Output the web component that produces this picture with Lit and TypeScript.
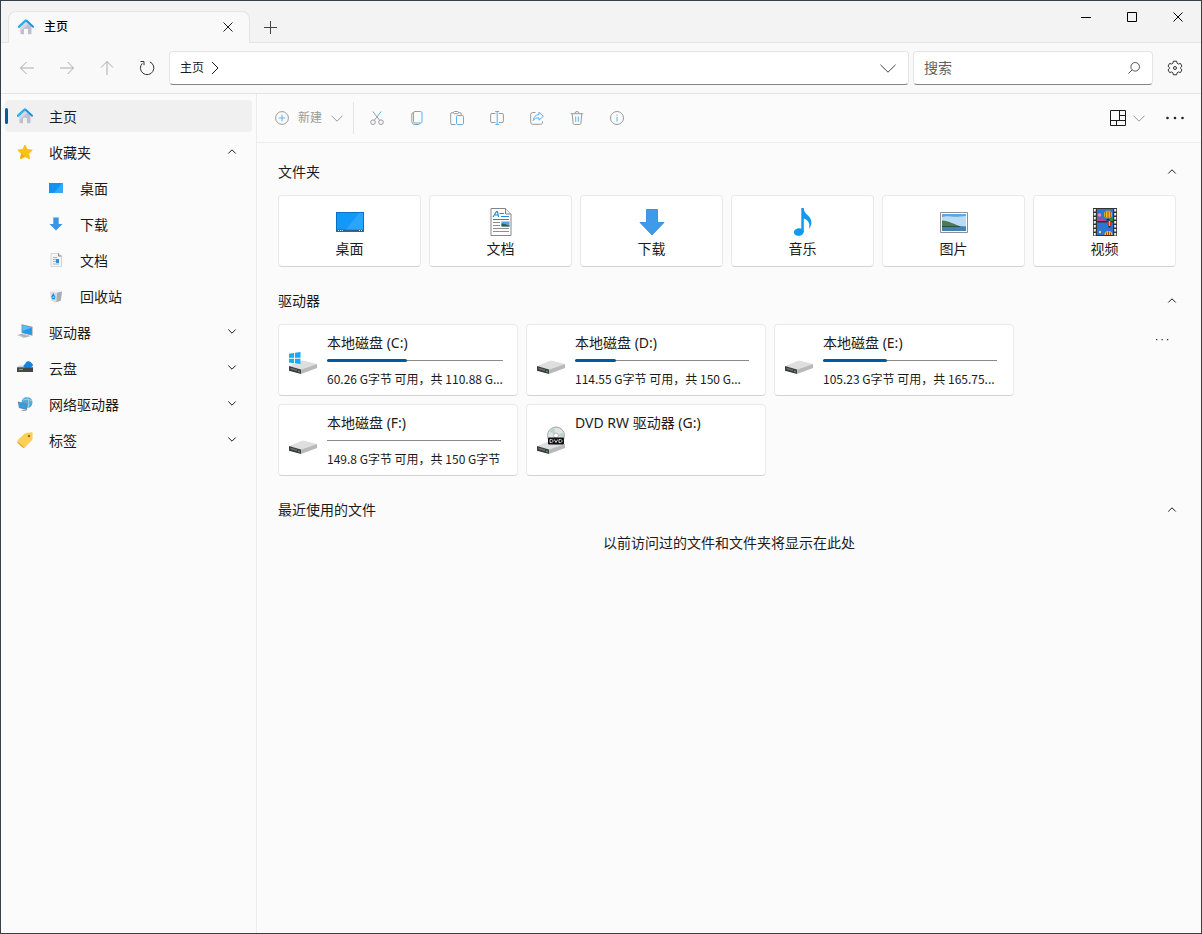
import { LitElement, html, css, svg, nothing } from "lit";
import { customElement, property, state } from "lit/decorators.js";
import { classMap } from "lit/directives/class-map.js";

const DISK = svg`
  <path d="M0 20 14 14.500 28 18 12 23.500z" fill="#dedede"/>
  <path d="M0 20 12 23.500 12 28 0 24.800z" fill="#3a3c3b"/>
  <path d="M1.500 21.800 8 23.600 8 25 1.500 23.200z" fill="#6d706e"/>
  <path d="M12 23.500 28 18 28 22 12 28z" fill="#b9b9b9"/>
  <path d="M10 24.500v1.800" stroke="#3fbf3a" stroke-width="1.500"/>`;

const ICONS: Record<string, [string, unknown]> = {
  home: ["0 0 16 16", svg`
    <path d="M2.500 7.500 8 2.500l5.500 5V14a1.200 1.200 0 0 1-1.200 1.200H10V10.500a.8.8 0 0 0-.8-.8H6.800a.8.8 0 0 0-.8.800v4.700H3.700A1.200 1.200 0 0 1 2.500 14z" fill="#bcc0cf"/>
    <path d="M2.500 7.500 8 2.500l2.500 2.300L2.500 12z" fill="#d5d8e2"/>
    <path d="M.9 7.800 7.400 1.700a.9.9 0 0 1 1.200 0l6.500 6.100" fill="none" stroke="#1c8fe0" stroke-width="1.900" stroke-linecap="round" stroke-linejoin="round"/>
    <path d="M.9 7.800 7.600 1.500" fill="none" stroke="#2fb4ee" stroke-width="1.900" stroke-linecap="round"/>`],
  star: ["0 0 16 16", svg`
    <path d="M8 1 10.200 5.500 15.200 6.200 11.600 9.700 12.500 14.800 8 12.400 3.500 14.800 4.400 9.700.8 6.200 5.800 5.500z" fill="#fcc012" stroke="#fcc012" stroke-linejoin="round"/>
    <path d="M8 12.400 3.500 14.800 4.400 9.700z" fill="#f5a60f"/>`],
  desktopSmall: ["0 0 14 14", svg`<path d="M0 2h14v10H0z" fill="#0f93f5"/><path d="M5 12 13 2h1v10z" fill="#35a8fa"/>`],
  downloadSmall: ["0 0 14 14", svg`<path d="M4.300.500h5.400V7h3.800L7 13.500.5 7h3.800z" fill="#3794e6"/>`],
  docSmall: ["0 0 14 14", svg`
    <path d="M2 .500h7.500l3 2.500v10.500h-10.500z" fill="#f4f5f6" stroke="#d3d6da"/>
    <path d="M4 4.500h4M4 6.500h6M4 8.500h3M4 11h6" stroke="#8cb9dc"/><path d="M7 6h3v4H7z" fill="#3b8cc9"/><path d="M9.500.500v2.500h3" fill="none" stroke="#7d8690"/>`],
  recycle: ["0 0 14 14", svg`
    <path d="M.8 2.500 8 .5l5 2-1.200 9L6.500 13.700 2.300 11.500z" fill="#d9dce0"/>
    <path d="M8 3.500 13 2.500l-1.200 9L7.500 13.300z" fill="#a9adb4"/>
    <path d="M.8 2.500 8 3.500l5-1L8 .5z" fill="#f2f3f4"/>
    <path d="M2.500 8.500 4.300 5.500 6 8.500M3 9.500h3" fill="none" stroke="#1c8be0" stroke-width="1.400"/>`],
  pc: ["0 0 16 16", svg`
    <path d="M4.500 .3 15.500 2.800v9L4.500 9z" fill="#8896a3"/><path d="M5.300 1.300 14.800 3.500v7.200L5.300 8.300z" fill="#1f9af0"/>
    <path d="M5.300 1.300 14.800 3.500 5.500 7z" fill="#5cbcf8"/>
    <path d="M0 11 6 9.800 14 12.300 7 14z" fill="#c9d0d6"/><path d="M1.500 11.100 6 10.200M4 12 9 10.900M6 12.900 12 11.700" stroke="#8d979f" stroke-width=".6"/>`],
  cloud: ["0 0 16 16", svg`
    <path d="M2 5.500h12l2 2H0z" fill="#cfd6db"/>
    <path d="M6.500 6.500a2.500 2.500 0 0 1 1.600-2.600A3.500 3.500 0 0 1 14.500 3 2.400 2.400 0 0 1 15.300 6.500L12.500 7.500H8z" fill="#1683da"/>
    <path d="M0 7.300h16v4.700H0z" fill="#444648"/><path d="M2 9.500h4" stroke="#3fc14b" stroke-width="1.300"/>`],
  network: ["0 0 16 16", svg`
    <circle cx="10" cy="6.500" r="5.500" fill="#54a8d6"/><path d="M6 4c3-1 6-1 9 1M10 1c2 3 2.500 7 1 11" fill="none" stroke="#a8d6ee" stroke-width=".9"/>
    <path d="M.8 5.500 10 7.800V14L2 12z" fill="#6e818f"/><path d="M1.600 6.500 9.300 8.400v4.600L2.500 11.300z" fill="#27a1f3"/>
    <path d="M4 14.200 8 13.500l2 1.500H5z" fill="#9fadb7"/>`],
  tag: ["0 0 16 16", svg`
    <path d="M9 .9 14.400.3A1.200 1.200 0 0 1 15.700 1.600l-.2 5.400a2 2 0 0 1-.5 1.200L8.600 14.800a1.500 1.500 0 0 1-2.100 0L1 9.900a1.500 1.500 0 0 1 0-2.100L7.700 1.400A2 2 0 0 1 9 .9z" fill="#fcd053"/>
    <path d="M.7 9.200 6.500 14.500a1.400 1.400 0 0 0 2 .1l-1 1a1.500 1.500 0 0 1-2 0L.8 11.300a1.500 1.500 0 0 1-.1-2.100z" fill="#eda63b"/>
    <circle cx="12" cy="4" r="1.200" fill="#9c6a20"/>`],
  back: ["0 0 16 16", svg`<path d="M15 8H1.500M7.500 2 1.500 8l6 6" class="ln"/>`],
  forward: ["0 0 16 16", svg`<path d="M1 8h13.500M8.500 2l6 6-6 6" class="ln"/>`],
  up: ["0 0 16 16", svg`<path d="M8 15V1.500M2 7.500l6-6 6 6" class="ln"/>`],
  reload: ["0 0 16 16", svg`<path d="M10.800 1.800A6.700 6.700 0 1 1 3.300 3.300M1.500 1.500H5v3.700" class="ln"/>`],
  chevRight: ["0 0 8 14", svg`<path d="M1 1l6 6-6 6" class="ln"/>`],
  chevDown: ["0 0 16 9", svg`<path d="M.5.800 8 8.200 15.500.8" class="ln"/>`],
  chevMid: ["0 0 12 7", svg`<path d="M.5.700 6 6.200 11.500.7" class="ln"/>`],
  caretDown: ["0 0 8 7", svg`<path d="M.3.500 4 4.200 7.700.5" class="ln"/>`],
  caretUp: ["0 0 8 7", svg`<path d="M.3 4.500 4 .8 7.700 4.500" class="ln"/>`],
  close: ["0 0 10 10", svg`<path d="M.5.500l9 9M9.500.500l-9 9" class="ln"/>`],
  plus: ["0 0 13 13", svg`<path d="M6.500 0v13M0 6.500h13" class="ln"/>`],
  min: ["0 0 10 10", svg`<path d="M0 5.500h10" class="ln"/>`],
  max: ["0 0 10 10", svg`<path d="M.5.500h9v9h-9z" class="ln"/>`],
  search: ["0 0 12 12", svg`<circle cx="7.200" cy="4.800" r="4.300" class="ln"/><path d="M4.100 7.900.4 11.600" class="ln"/>`],
  gear: ["0 0 16 16", svg`<path d="M6.400 1.200h3.200l.5 2 1.300.8 2-.6 1.600 2.800L13.500 7.600v.8L15 9.800l-1.600 2.800-2-.6-1.300.8-.5 2H6.400l-.5-2-1.300-.8-2 .6L1 9.800l1.500-1.400v-.8L1 6.200l1.600-2.800 2 .6 1.300-.8z" class="ln" stroke-linejoin="round"/><circle cx="8" cy="8" r="1.500" class="ln"/>`],
  create: ["0 0 14 14", svg`<circle cx="7" cy="7" r="6.400" class="ln"/><path d="M7 3.700v6.600M3.700 7h6.600" class="bl"/>`],
  cut: ["0 0 14 14", svg`<circle cx="3" cy="11.200" r="2.300" class="ln"/><circle cx="11" cy="11.200" r="2.300" class="ln"/><path d="M2.800.500 9.700 9.300" class="ln"/><path d="M4.300 9.300 6.500 6.500" class="ln"/><path d="M6.500 6.500 11.200.5" class="bl"/>`],
  copy: ["0 0 14 14", svg`<path d="M3.300 1.500a1.800 1.800 0 0 0-1.500 1.700v7.300a3 3 0 0 0 3 3H8.500a1.800 1.800 0 0 0 1.600-1.200" class="ln"/><rect x="3.500" y=".5" width="8.500" height="11.500" rx="1.500" class="bl"/>`],
  paste: ["0 0 14 14", svg`<path d="M5.500 13.500H2A1.200 1.200 0 0 1 .7 12.300V3A1.200 1.200 0 0 1 2 1.700h1.500M8.500 1.700H10A1.200 1.200 0 0 1 11.200 3v.8" class="ln"/><rect x="3.500" y=".5" width="5" height="2.200" rx="1" class="ln"/><rect x="6.500" y="4.500" width="7" height="9" rx="1.200" class="bl"/>`],
  rename: ["0 0 14 14", svg`<path d="M5.500 2.500H2A1.300 1.300 0 0 0 .6 3.800v6.400A1.300 1.300 0 0 0 2 11.500h3.500M8.800 2.500H12a1.300 1.300 0 0 1 1.400 1.300v6.400A1.300 1.300 0 0 1 12 11.500H8.800" class="ln"/><path d="M7.200.5v13M5.300.500h3.800M5.300 13.500h3.800" class="bl"/>`],
  share: ["0 0 14 14", svg`<path d="M5.500 1.500H2.700A2 2 0 0 0 .7 3.500v7.800a2 2 0 0 0 2 2h7.800a2 2 0 0 0 2-2V10.200" class="ln"/><path d="M9 1.200 13.400 5.200 9 9.200V6.900C6.200 6.700 4.500 7.500 3.200 9.600 3.500 6.300 5.300 3.900 9 3.500z" class="bl" stroke-linejoin="round"/>`],
  trash: ["0 0 14 14", svg`<path d="M.8 2.700h12.400M5 2.500a2 2 0 0 1 4 0M2.200 2.800 3.100 12.200a1.400 1.400 0 0 0 1.400 1.300h5a1.400 1.400 0 0 0 1.400-1.300L11.800 2.800" class="ln"/><path d="M5.700 5.500v5.300M8.300 5.500v5.300" class="bl"/>`],
  info: ["0 0 14 14", svg`<circle cx="7" cy="7" r="6.500" class="ln"/><path d="M7 6v4.500M7 3.500v1.200" class="bl"/>`],
  layout: ["0 0 16 16", svg`<path d="M.5.500h15v15H.5zM.5 10.500h15M9.500.500v10M9.500 5.500h6M6.500 10.500v5" class="ln"/>`],
  dotsBig: ["0 0 18 4", svg`<circle cx="1.500" cy="2" r="1.300"/><circle cx="9" cy="2" r="1.300"/><circle cx="16.500" cy="2" r="1.300"/>`],
  dots: ["0 0 14 2", svg`<path d="M1 0h1.300v1.300H1zM6.500 0h1.300v1.300H6.500zM12 0h1.300v1.300H12z"/>`],
  desktop: ["0 0 28 28", svg`<path d="M0 4h28v20H0z" fill="#0b6fc2"/><path d="M1 5h26v16.500H1z" fill="#1199fa"/><path d="M10 21.500 23 5h4v16.500z" fill="#2ba5fb"/><path d="M1 22.500h26" stroke="#2e5f8d"/><path d="M2 22.500h6M23 22.500h3" stroke="#d3e6f5" stroke-dasharray="1 1"/>`],
  document: ["0 0 28 28", svg`
    <path d="M4 .500h14.500L24 6v21.500H4z" fill="#fff" stroke="#858585"/>
    <path d="M18.500.500V6H24" fill="#f0f0f0" stroke="#858585"/>
    <path d="M6 9 9.500 3.500h1L11.500 9M8 7h3M12.500 5.500h4.500M14 8.500h8M6 11.500h16" fill="none" stroke="#1590e0" stroke-width="1.200"/>
    <path d="M6 14.500h7M6 17.500h7M6 20.500h16M6 23.500h16" stroke="#8f8f8f"/>
    <path d="M14.500 13.500h8v5h-8z" fill="#5aa3d6"/><path d="M14.500 15.500c3 0 5 1.500 8 2v1h-8z" fill="#2d5f54"/>`],
  download: ["0 0 28 28", svg`<path d="M8.500 1.500h11v13h6.500L14 27 2 14.500h6.500z" fill="#3f9aea" stroke="#2f82d0" stroke-width=".8"/>`],
  music: ["0 0 28 28", svg`<ellipse cx="9.800" cy="24" rx="5" ry="3.800" transform="rotate(-12 9.800 24)" fill="#0d9bf2"/><path d="M12.300 0h2.500c0 3.500 1.500 5 4 7.200 4.500 4 4.800 9.300 1.200 13.800 1-5 .2-8.500-5.200-10.500v13.500h-2.500z" fill="#0d9bf2"/>`],
  picture: ["0 0 28 28", svg`
    <path d="M.5 4.500h27v20H.5z" fill="#fff" stroke="#8e8e8e"/><path d="M2 6h24v17H2z" fill="#5da5e3"/>
    <path d="M2 9c6-2 10 1 24-1v10H2z" fill="#b9dcf4"/><path d="M2 12.500c7 0 12 4.500 22 6.500H2z" fill="#4c7a55"/>
    <path d="M2 19h24v4H2z" fill="#4481ad"/><path d="M2 18.500h18" stroke="#2a4f48"/>`],
  video: ["0 0 28 28", svg`
    <path d="M2 0h24v28H2z" fill="#333"/>
    <path d="M3.800 1v27M24.200 1v27" stroke="#f2f2f2" stroke-width="2" stroke-dasharray="2.400 1.600"/>
    <path d="M6 1h16v12H6zM6 14.500h16V27H6z" fill="#2f74d4"/>
    <circle cx="17" cy="6.500" r="4" fill="#f5c21b"/><path d="M15 3.200c-1 2-1 4.500 0 6.600M17 2.500v8M19 3.200c1 2 1 4.500 0 6.600" fill="none" stroke="#8a2f1e" stroke-width=".8"/><path d="M15.500 10.700h3v1.800h-3z" fill="#222"/>
    <circle cx="8.500" cy="7" r="1.800" fill="#ec87b4"/><path d="M6 10.500h6l3 2.500H6z" fill="#cc3e78"/><path d="M19 10h3v3h-3z" fill="#2b8a3e"/>
    <circle cx="18.500" cy="15.500" r="2.600" fill="#d5361e"/><path d="M18.500 13v5" stroke="#f5c21b"/><path d="M17.500 18h2v1.500h-2z" fill="#222"/>
    <path d="M13.500 27a4 4 0 0 1 8 0z" fill="#f5c21b"/><path d="M15.500 27v-2.500M17.500 27v-3.500M19.500 27v-2.500" stroke="#8a2f1e" stroke-width=".8"/><circle cx="9" cy="24" r="1.200" fill="#e6d37a"/>`],
  disk: ["0 -2 28 32", DISK],
  diskWin: ["0 -2 28 32", svg`${DISK}<path d="M0 7.800 5 7v4.800H0zM6 6.800 11.500 6v5.800H6zM0 12.700h5v4.600l-5-.8zM6 12.700h5.500v5.300l-5.500-.8z" fill="#11aef0"/>`],
  diskDvd: ["0 -2 28 32", svg`${DISK}
    <circle cx="19" cy="9.500" r="8.500" fill="#dfe4e4" stroke="#8f9696" stroke-width=".8"/><path d="M19 9.500 12 5a8.500 8.500 0 0 1 5-3.500zM19 9.500l7.500-3a8.500 8.500 0 0 1 .5 5z" fill="#bcd3cd"/>
    <circle cx="19" cy="9.500" r="2.400" fill="#fff" stroke="#999" stroke-width=".7"/>
    <rect x="11" y="11.500" width="16" height="7" rx="1" fill="#111"/>
    <path d="M13 13.500v3h1.500c2 0 2-3 0-3zM17.300 13.500 19 16.500 20.700 13.500M22 13.500v3h1.500c2 0 2-3 0-3z" fill="none" stroke="#ddd" stroke-width=".9"/>`],
};

@customElement("fm-icon")
class FmIcon extends LitElement {
  static styles = css`
    :host { display: inline-flex; flex: none; }
    svg { display: block; fill: currentColor; overflow: visible; }
    .ln { fill: none; stroke: currentColor; }
    .bl { fill: none; stroke: #5bb1ec; }
  `;
  @property() name = "";
  render() {
    const icon = ICONS[this.name];
    if (!icon) return nothing;
    const [, , w, h] = icon[0].split(" ");
    return html`<svg width=${w} height=${h} viewBox=${icon[0]} aria-hidden="true">${icon[1]}</svg>`;
  }
}

interface NavEntry { icon: string; label: string; id?: string; children?: NavEntry[] }
const NAV: NavEntry[] = [
  { icon: "home", label: "主页" },
  { icon: "star", label: "收藏夹", id: "fav", children: [
    { icon: "desktopSmall", label: "桌面" },
    { icon: "downloadSmall", label: "下载" },
    { icon: "docSmall", label: "文档" },
    { icon: "recycle", label: "回收站" },
  ] },
  { icon: "pc", label: "驱动器", id: "drives", children: [] },
  { icon: "cloud", label: "云盘", id: "cloud", children: [] },
  { icon: "network", label: "网络驱动器", id: "net", children: [] },
  { icon: "tag", label: "标签", id: "tags", children: [] },
];

const FOLDERS = [
  ["desktop", "桌面"], ["document", "文档"], ["download", "下载"],
  ["music", "音乐"], ["picture", "图片"], ["video", "视频"],
];

interface Drive { icon: string; name: string; used?: number; info?: string }
const DRIVES: Drive[] = [
  { icon: "diskWin", name: "本地磁盘 (C:)", used: 45.6, info: "60.26 G字节 可用，共 110.88 G..." },
  { icon: "disk", name: "本地磁盘 (D:)", used: 23.6, info: "114.55 G字节 可用，共 150 G..." },
  { icon: "disk", name: "本地磁盘 (E:)", used: 36.5, info: "105.23 G字节 可用，共 165.75..." },
  { icon: "disk", name: "本地磁盘 (F:)", used: 0, info: "149.8 G字节 可用，共 150 G字节" },
  { icon: "diskDvd", name: "DVD RW 驱动器 (G:)" },
];

const ACTIONS = [
  ["cut", "剪切"], ["copy", "复制"], ["paste", "粘贴"], ["rename", "重命名"],
  ["share", "共享"], ["trash", "删除"], ["info", "属性"],
];

@customElement("app-root")
class AppRoot extends LitElement {
  static styles = css`
    :host {
      display: flex;
      flex-direction: column;
      box-sizing: border-box;
      min-height: 100vh;
      border: 1px solid #35404a;
      background: #fbfbfb;
      color: #1b1b1b;
      font: 14px/20px "Noto Sans", "Noto Sans CJK SC", sans-serif;
    }
    *, *::before { box-sizing: border-box; }
    button, input {
      font: inherit;
      color: inherit;
      background: none;
      border: 0;
      padding: 0;
      margin: 0;
    }
    button { display: inline-flex; align-items: center; justify-content: center; }
    h2 { margin: 0; font-size: 14px; font-weight: 400; }
    ul { list-style: none; margin: 0; padding: 0; }

    .titlebar {
      display: flex;
      height: 42px;
      padding-left: 7px;
      background: #f3f3f3;
      box-shadow: inset 0 -1px #e5e5e5;
    }
    .tab {
      display: flex;
      align-items: center;
      width: 242px;
      margin-top: 10px;
      padding: 0 11px 2px 9px;
      background: #f9f9f9;
      border: 1px solid #e5e5e5;
      border-bottom: 0;
      border-radius: 8px 8px 0 0;
    }
    .tab-name { flex: 1; margin-left: 10px; font-size: 12px; font-weight: 500; color: #000; }
    .tab-close { width: 20px; height: 20px; }
    .tab-add { width: 41px; height: 32px; margin: 10px auto 0 0; color: #444; }
    .caption { width: 46px; height: 32px; color: #000; }

    .navbar {
      display: flex;
      align-items: center;
      height: 51px;
      padding: 0 9px 0 6px;
      background: #f9f9f9;
      border-bottom: 1px solid #e5e5e5;
    }
    .nav-btn { width: 40px; height: 34px; color: #333; }
    .nav-btn:disabled { color: #ababab; }
    .field {
      display: flex;
      align-items: center;
      height: 34px;
      background: #fff;
      border: 1px solid #e5e5e5;
      border-bottom-color: #868686;
      border-radius: 4px;
    }
    .path { flex: 1; margin: 0 4px 0 2px; padding: 0 12px 0 10px; gap: 7px; font-size: 12px; color: #1b1b1b; }
    .path-open { margin-left: auto; height: 32px; color: #444; }
    .find { width: 240px; padding: 0 12px 0 10px; color: #555; }
    .find input { flex: 1; min-width: 0; outline: none; }
    .find input::placeholder { color: #606060; opacity: 1; }
    .find button { height: 32px; }
    .settings { width: 34px; height: 34px; margin-left: 5px; color: #333; }

    .body { display: flex; flex: 1; }
    .side { width: 256px; padding: 6px 4px; border-right: 1px solid #ececec; }
    .side ul { display: grid; gap: 4px; }
    .side ul ul { margin-top: 4px; }
    .item {
      display: flex;
      justify-content: flex-start;
      width: 100%;
      height: 32px;
      padding: 0 16px 0 12px;
      gap: 16px;
      border-radius: 4px;
      text-align: left;
    }
    .item.child { padding-left: 44px; gap: 17px; }
    .item.current { position: relative; background: #f0f0f0; }
    .item.current::before {
      content: "";
      position: absolute;
      left: 0;
      top: 8px;
      width: 3px;
      height: 16px;
      border-radius: 2px;
      background: #005a9e;
    }
    .item-name { flex: 1; padding-top: 2px; }

    .main { flex: 1; min-width: 0; }
    .toolbar {
      display: flex;
      align-items: center;
      height: 49px;
      padding: 0 11px 0 18px;
      border-bottom: 1px solid #ececec;
      color: #9a9a9a;
    }
    .new { gap: 9px; height: 32px; font-size: 12px; }
    .sep { width: 1px; height: 32px; margin: 0 3px 0 10px; background: #e5e5e5; }
    .tool { width: 40px; height: 32px; }
    .view { gap: 7px; height: 32px; margin-left: auto; }
    .view-icon { color: #1b1b1b; }
    .more-big { width: 30px; height: 32px; margin-left: 15px; color: #222; }

    .content { display: grid; gap: 24px; padding: 19px 21px; }
    .head { display: flex; justify-content: space-between; align-items: center; height: 20px; }
    .head button { width: 16px; height: 20px; }
    .folders {
      display: grid;
      grid-template-columns: repeat(auto-fill, minmax(140px, 1fr));
      gap: 8px;
      padding: 13px 4px 0 0;
    }
    .card {
      background: #fff;
      border: 1px solid #e9e9e9;
      border-bottom-color: #d3d3d3;
      border-radius: 4px;
      height: 72px;
    }
    .folder { flex-direction: column; gap: 3px; padding-top: 4px; }
    .drive-row { display: flex; align-items: flex-start; padding-top: 13px; }
    .drives { display: grid; flex: 1; grid-template-columns: repeat(auto-fill, 240px); gap: 8px; }
    .drive { display: flex; justify-content: flex-start; align-items: center; gap: 10px; padding: 0 16px 0 10px; text-align: left; }
    .drive-text { display: grid; flex: 1; min-width: 0; align-self: stretch; align-content: start; padding-top: 8px; gap: 6px; }
    .drive-info { white-space: nowrap; font: 12px/22px "Noto Sans CJK SC", sans-serif; }
    .bar { display: flex; align-items: center; height: 3px; background: linear-gradient(#8a8a8a, #8a8a8a) center / 100% 1px no-repeat; }
    .fill { height: 3px; border-radius: 2px; background: #005a9e; }
    .more { width: 36px; height: 32px; color: #333; }
    .empty { margin: 13px 0 0; text-align: center; }
  `;

  @state() private open: Record<string, boolean> = { fav: true, folders: true, disks: true, recent: true };

  private toggle(id: string) {
    this.open = { ...this.open, [id]: !this.open[id] };
  }

  private navItem(e: NavEntry, child = false) {
    return html`<li>
      <button class=${classMap({ item: true, child, current: e.icon === "home" })} @click=${() => e.id && this.toggle(e.id)}>
        <fm-icon name=${e.icon}></fm-icon>
        <span class="item-name">${e.label}</span>
        ${e.id ? html`<fm-icon name=${this.open[e.id] ? "caretUp" : "caretDown"}></fm-icon>` : nothing}
      </button>
      ${e.id && this.open[e.id] && e.children!.length ? html`<ul>${e.children!.map((c) => this.navItem(c, true))}</ul>` : nothing}
    </li>`;
  }

  private head(id: string, title: string) {
    return html`<div class="head">
      <h2>${title}</h2>
      <button aria-label=${title} aria-expanded=${this.open[id]} @click=${() => this.toggle(id)}>
        <fm-icon name=${this.open[id] ? "caretUp" : "caretDown"}></fm-icon>
      </button>
    </div>`;
  }

  private drive(d: Drive) {
    return html`<button class="card drive">
      <fm-icon name=${d.icon}></fm-icon>
      <span class="drive-text">
        <span>${d.name}</span>
        ${d.info ? html`
          <span class="bar" role="progressbar" aria-label=${d.name} aria-valuenow=${d.used!}>
            <span class="fill" style="width:${d.used}%"></span>
          </span>
          <span class="drive-info">${d.info}</span>` : nothing}
      </span>
    </button>`;
  }

  render() {
    return html`
      <header class="titlebar">
        <div class="tab">
          <fm-icon name="home"></fm-icon>
          <span class="tab-name">主页</span>
          <button class="tab-close" aria-label="关闭标签页"><fm-icon name="close"></fm-icon></button>
        </div>
        <button class="tab-add" aria-label="新建标签页"><fm-icon name="plus"></fm-icon></button>
        <button class="caption" aria-label="最小化"><fm-icon name="min"></fm-icon></button>
        <button class="caption" aria-label="最大化"><fm-icon name="max"></fm-icon></button>
        <button class="caption" aria-label="关闭"><fm-icon name="close"></fm-icon></button>
      </header>
      <div class="navbar">
        <button class="nav-btn" disabled aria-label="后退"><fm-icon name="back"></fm-icon></button>
        <button class="nav-btn" disabled aria-label="前进"><fm-icon name="forward"></fm-icon></button>
        <button class="nav-btn" disabled aria-label="向上"><fm-icon name="up"></fm-icon></button>
        <button class="nav-btn" aria-label="刷新"><fm-icon name="reload"></fm-icon></button>
        <nav class="field path" aria-label="路径">
          <button>主页</button>
          <fm-icon name="chevRight"></fm-icon>
          <button class="path-open" aria-label="展开路径"><fm-icon name="chevDown"></fm-icon></button>
        </nav>
        <div class="field find">
          <input type="text" placeholder="搜索" aria-label="搜索" />
          <button aria-label="开始搜索"><fm-icon name="search"></fm-icon></button>
        </div>
        <button class="settings" aria-label="设置"><fm-icon name="gear"></fm-icon></button>
      </div>
      <div class="body">
        <nav class="side" aria-label="侧边栏"><ul>${NAV.map((e) => this.navItem(e))}</ul></nav>
        <main class="main">
          <div class="toolbar">
            <button class="new"><fm-icon name="create"></fm-icon>新建<fm-icon name="chevMid"></fm-icon></button>
            <span class="sep"></span>
            ${ACTIONS.map(([icon, label]) => html`<button class="tool" aria-label=${label}><fm-icon name=${icon}></fm-icon></button>`)}
            <button class="view" aria-label="布局">
              <fm-icon class="view-icon" name="layout"></fm-icon><fm-icon name="chevMid"></fm-icon>
            </button>
            <button class="more-big" aria-label="更多"><fm-icon name="dotsBig"></fm-icon></button>
          </div>
          <div class="content">
            <section>
              ${this.head("folders", "文件夹")}
              ${this.open.folders ? html`<div class="folders">
                ${FOLDERS.map(([icon, label]) => html`<button class="card folder"><fm-icon name=${icon}></fm-icon>${label}</button>`)}
              </div>` : nothing}
            </section>
            <section>
              ${this.head("disks", "驱动器")}
              ${this.open.disks ? html`<div class="drive-row">
                <div class="drives">${DRIVES.map((d) => this.drive(d))}</div>
                <button class="more" aria-label="驱动器选项"><fm-icon name="dots"></fm-icon></button>
              </div>` : nothing}
            </section>
            <section>
              ${this.head("recent", "最近使用的文件")}
              ${this.open.recent ? html`<p class="empty">以前访问过的文件和文件夹将显示在此处</p>` : nothing}
            </section>
          </div>
        </main>
      </div>
    `;
  }
}
